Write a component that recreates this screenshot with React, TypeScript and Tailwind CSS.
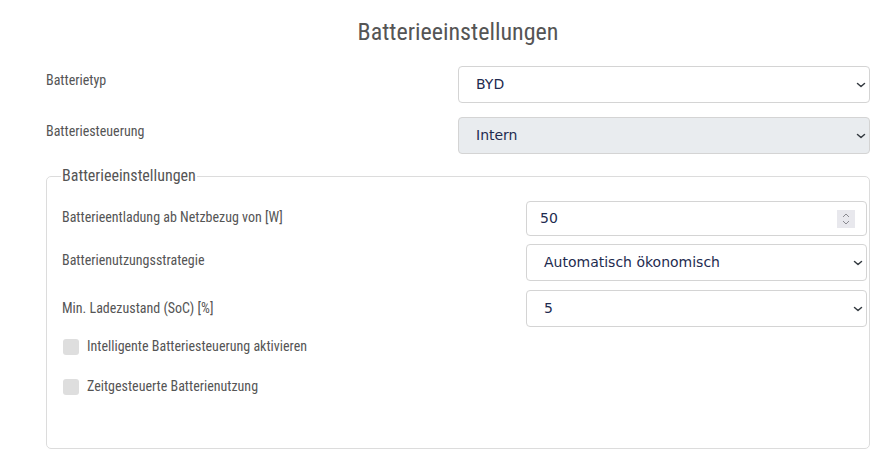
import React from 'react';

const condensed =
  "font-['Roboto_Condensed','Liberation_Sans_Narrow','DejaVu_Sans_Condensed',Roboto,sans-serif] [font-stretch:condensed]";

const Chevron = () => (
  <svg
    width="10"
    height="6"
    viewBox="0 0 10 6"
    className="absolute right-[3px] top-1/2 -translate-y-1/2"
  >
    <path d="M1.5 1.5 L5 4.5 L8.5 1.5" fill="none" stroke="#343a40" strokeWidth="1.5" strokeLinecap="round" strokeLinejoin="round" />
  </svg>
);

const SelectBox = ({ value, disabled }: { value: string; disabled?: boolean }) => (
  <div
    className={`relative flex h-[37px] items-center rounded-[4px] border border-[#d4d4d4] pl-[17px] text-[14px] text-[#1e2b4f] font-['DejaVu_Sans',sans-serif] ${
      disabled ? 'bg-[#e9ecef]' : 'bg-white'
    }`}
  >
    {value}
    <Chevron />
  </div>
);

const NumberBox = ({ value }: { value: string }) => (
  <div className="relative flex h-[35px] items-center rounded-[4px] border border-[#d4d4d4] bg-white pl-[13px] text-[14px] text-[#1e2b4f] font-['DejaVu_Sans',sans-serif]">
    {value}
    <div className="absolute right-[11px] top-1/2 flex h-[18px] w-[18px] -translate-y-1/2 flex-col items-center justify-center gap-[2px] bg-[#e8e8ed]">
      <svg width="8" height="5" viewBox="0 0 8 5">
        <path d="M1 4 L4 1 L7 4" fill="none" stroke="#8a8a90" strokeWidth="1" />
      </svg>
      <svg width="8" height="5" viewBox="0 0 8 5">
        <path d="M1 1 L4 4 L7 1" fill="none" stroke="#8a8a90" strokeWidth="1" />
      </svg>
    </div>
  </div>
);

const CheckRow = ({ label }: { label: string }) => (
  <div className="flex h-[20px] items-center">
    <span className="ml-[1px] h-[16px] w-[16px] rounded-[3px] bg-[#dedede]" />
    <span className={`ml-[8px] pb-[1px] text-[14px] text-[#555] ${condensed}`}>{label}</span>
  </div>
);

export default function App() {
  return (
    <div className="min-h-[459px] bg-white pl-[46px] pr-[14px]">
      <h2 className={`pt-[17px] text-center text-[24px] leading-[30px] text-[#555] ${condensed}`}>
        Batterieeinstellungen
      </h2>

      <div className="mt-[19px] flex flex-col gap-[14px]">
        <div className="flex">
          <div className={`w-[412px] pt-[4px] text-[14px] leading-[20px] text-[#555] ${condensed}`}>Batterietyp</div>
          <div className="flex-1">
            <SelectBox value="BYD" />
          </div>
        </div>
        <div className="flex">
          <div className={`w-[412px] pt-[4px] text-[14px] leading-[20px] text-[#555] ${condensed}`}>Batteriesteuerung</div>
          <div className="flex-1">
            <SelectBox value="Intern" disabled />
          </div>
        </div>
      </div>

      <fieldset className="mt-[12px] h-[283px] rounded-[5px] border border-[#dcdcdc] pl-[15px] pr-[2px]">
        <legend className={`-ml-[1px] px-[1px] text-[16px] leading-[20px] text-[#555] ${condensed}`}>
          Batterieeinstellungen
        </legend>

        <div className="mt-[15px] flex flex-col gap-[8px]">
          <div className="flex items-center">
            <div className={`w-[464px] pb-[2px] text-[14px] text-[#555] ${condensed}`}>Batterieentladung ab Netzbezug von [W]</div>
            <div className="w-[341px]">
              <NumberBox value="50" />
            </div>
          </div>
          <div className="flex items-center">
            <div className={`w-[464px] pb-[4px] text-[14px] text-[#555] ${condensed}`}>Batterienutzungsstrategie</div>
            <div className="w-[341px]">
              <SelectBox value="Automatisch ökonomisch" />
            </div>
          </div>
          <div className="mt-[1px] flex items-center">
            <div className={`w-[464px] text-[14px] text-[#555] ${condensed}`}>Min. Ladezustand (SoC) [%]</div>
            <div className="w-[341px]">
              <SelectBox value="5" />
            </div>
          </div>
        </div>

        <div className="mt-[10px] flex flex-col gap-[20px]">
          <CheckRow label="Intelligente Batteriesteuerung aktivieren" />
          <CheckRow label="Zeitgesteuerte Batterienutzung" />
        </div>
      </fieldset>
    </div>
  );
}
